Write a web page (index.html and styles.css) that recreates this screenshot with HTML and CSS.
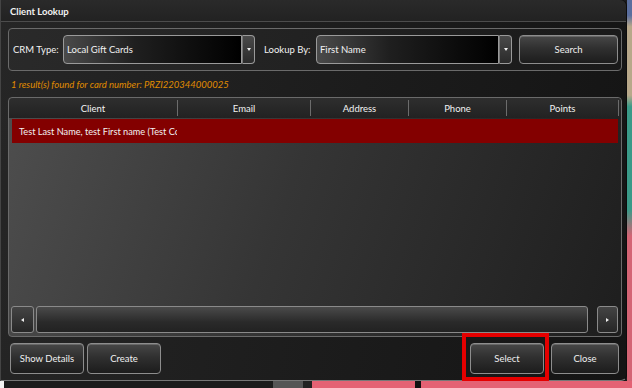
FILE: index.html
```html
<!DOCTYPE html>
<html>
<head>
<meta charset="utf-8">
<link rel="stylesheet" href="styles.css">
</head>
<body>
<div class="desk">
  <div class="win">
    <div class="title">Client Lookup</div>
    <div class="content">
      <div class="group">
        <span class="lbl lb1">CRM Type:</span>
        <div class="combo c1"><div class="field">Local Gift Cards</div><div class="drop"><span class="tri"></span></div></div>
        <span class="lbl lb2">Lookup By:</span>
        <div class="combo c2"><div class="field">First Name</div><div class="drop"><span class="tri"></span></div></div>
        <div class="btn search">Search</div>
      </div>
      <div class="status">1 result(s) found for card number: PRZI220344000025</div>
      <div class="grid">
        <div class="head">
          <div class="col w1">Client</div>
          <div class="col w2">Email</div>
          <div class="col w3">Address</div>
          <div class="col w4">Phone</div>
          <div class="col w5">Points</div>
        </div>
        <div class="body">
          <div class="row sel"><div class="cell">Test Last Name, test First name (Test Company)</div></div>
        </div>
        <div class="scroll">
          <div class="sbtn"><span class="ltri"></span></div>
          <div class="thumb"></div>
          <div class="sbtn rb"><span class="rtri"></span></div>
        </div>
      </div>
      <div class="actions">
        <div class="btn b1">Show Details</div>
        <div class="btn b2">Create</div>
        <div class="spacer"></div>
        <div class="btn b3 marked">Select</div>
        <div class="btn b4">Close</div>
      </div>
    </div>
  </div>
  <div class="side"></div>
</div>
<div class="strip">
  <div class="s0"></div><div class="s1"></div><div class="s2"></div><div class="s3"></div><div class="s4"></div><div class="s5"></div><div class="s6"></div>
</div>
</body>
</html>
```
FILE: styles.css
```css
* { box-sizing: border-box; }
html, body { margin: 0; padding: 0; }
body {
  width: 632px; height: 388px; overflow: hidden;
  background: #1a1a1a;
  font-family: "Lato", "Open Sans", sans-serif;
  font-size: 9.5px; color: #f2f2f2;
}
.desk { display: flex; height: 381px; }
.win {
  flex: none;
  width: 627px; height: 381px;
  background: linear-gradient(100deg, #262626 0%, #1b1b1b 60%, #141414 100%);
  border-radius: 0 6px 6px 0;
  border-bottom: 1px solid #777;
  border-left: 1px solid #444;
  border-right: 1px solid #0c0c0c;
  display: flex; flex-direction: column;
}
.side {
  flex: none; width: 5px;
  background: linear-gradient(180deg, #5a6e9e 0%, #5a6e9e 4%, #b8a88a 7%, #b8a88a 25%, #3a9a88 28%, #3a9a88 55%, #d46474 62%, #d46474 100%);
}
.title {
  height: 22px; padding: 6px 0 0 9px;
  font-weight: 700; font-size: 9.5px; white-space: nowrap;
  border-bottom: 1px solid #4c4c4c;
  background: linear-gradient(180deg, #2a2a2a, #222);
  border-radius: 0 6px 0 0;
}
.content { padding: 0 4px 0 7px; display: flex; flex-direction: column; flex: 1; }
.group {
  margin-top: 6px; height: 43px;
  border: 1px solid #6a6a6a; border-radius: 4px;
  display: flex; align-items: center; padding: 0 2px 0 4px;
  background: rgba(255,255,255,0.02);
}
.lbl { font-size: 9.5px; white-space: nowrap; flex: none; }
.lb1 { width: 50px; }
.lb2 { width: 52px; margin-left: 9px; }
.combo { display: flex; height: 29px; flex: none; }
.c1 { width: 192px; }
.c2 { width: 196px; }
.field {
  flex: 1; border: 1px solid #9a9a9a; border-radius: 4px 0 0 4px;
  background: linear-gradient(90deg, #4a4a4a 0%, #1f1f1f 40%, #000 100%);
  padding: 8px 0 0 3px; font-size: 9.5px; white-space: nowrap;
}
.drop {
  width: 13px; border: 1px solid #9a9a9a; border-left: 1px solid #777; border-radius: 0 4px 4px 0;
  background: linear-gradient(180deg, #4a4a4a, #2a2a2a);
  display: flex; align-items: center; justify-content: center;
}
.tri { width: 0; height: 0; border-left: 2.5px solid transparent; border-right: 2.5px solid transparent; border-top: 3px solid #eee; }
.btn {
  border: 1px solid #8d8d8d; border-radius: 4px;
  background: linear-gradient(180deg, #474747 0%, #303030 45%, #1c1c1c 100%);
  box-shadow: inset 0 1px 0 rgba(255,255,255,0.18);
  display: flex; align-items: center; justify-content: center;
  font-size: 9.5px; color: #f0f0f0; white-space: nowrap; flex: none;
}
.search { width: 99px; height: 29px; margin-left: 7px; }
.status {
  height: 26px; padding: 8px 0 0 3px;
  color: #e08c00; font-style: italic; font-size: 9.5px; white-space: nowrap;
}
.grid {
  height: 240px; border: 1px solid #6a6a6a; border-radius: 4px;
  display: flex; flex-direction: column; padding: 0 3px 2px 2px;
  background: linear-gradient(110deg, #4e4e4e 0%, #353535 45%, #1e1e1e 100%);
}
.head {
  height: 20px; display: flex; margin: 0 -3px 0 -2px;
  background: linear-gradient(180deg, #2e2e2e, #222);
  border-radius: 4px 4px 0 0;
}
.col {
  display: flex; align-items: center; justify-content: center;
  border-right: 1px solid #6c6c6c; font-size: 9.5px; margin: 2px 0;
}
.w1 { width: 169px; }
.w2 { width: 133px; }
.w3 { width: 98px; }
.w4 { width: 98px; }
.w5 { width: 112px; }
.body { flex: 1; padding-top: 1px; }
.row.sel {
  height: 24px; background: #830000; margin-left: 1px;
  display: flex; align-items: center;
}
.cell { width: 165px; overflow: hidden; white-space: nowrap; padding-left: 7px; font-size: 9.2px; }
.scroll { height: 27px; display: flex; gap: 2px; align-items: stretch; margin-bottom: 1px; }
.sbtn {
  width: 23px; border: 1px solid #8a8a8a; border-radius: 3px;
  background: linear-gradient(180deg, #444, #262626);
  display: flex; align-items: center; justify-content: center;
}
.rb { width: 21px; margin-left: 7px; }
.ltri { width: 0; height: 0; border-top: 2px solid transparent; border-bottom: 2px solid transparent; border-right: 3px solid #eee; }
.rtri { width: 0; height: 0; border-top: 2px solid transparent; border-bottom: 2px solid transparent; border-left: 3px solid #eee; }
.thumb {
  flex: 1; border: 1px solid #8a8a8a; border-radius: 3px;
  background: linear-gradient(180deg, #4a4a4a, #2a2a2a 60%, #222);
}
.actions { display: flex; align-items: flex-start; margin-top: 6px; padding-left: 2px; padding-right: 3px; }
.b1 { width: 74px; height: 31px; }
.b2 { width: 74px; height: 31px; margin-left: 3px; }
.spacer { flex: 1; }
.b3 { width: 74px; height: 31px; margin-right: 7px; }
.b4 { width: 68px; height: 31px; }
.marked { position: relative; }
.marked::after {
  content: ""; position: absolute;
  top: -11px; left: -9px; right: -6px; bottom: -8px;
  border: 4px solid #e50000;
}
.strip { display: flex; height: 7px; }
.strip div { height: 7px; }
.s0 { width: 4px; background: #f4f4f4; }
.s1 { width: 269px; background: #1c1c1c; }
.s2 { width: 30px; background: #555; }
.s3 { width: 9px; background: #222; }
.s4 { width: 103px; background: #e46274; }
.s5 { width: 6px; background: #111; }
.s6 { flex: 1; background: #e46274; }
```
